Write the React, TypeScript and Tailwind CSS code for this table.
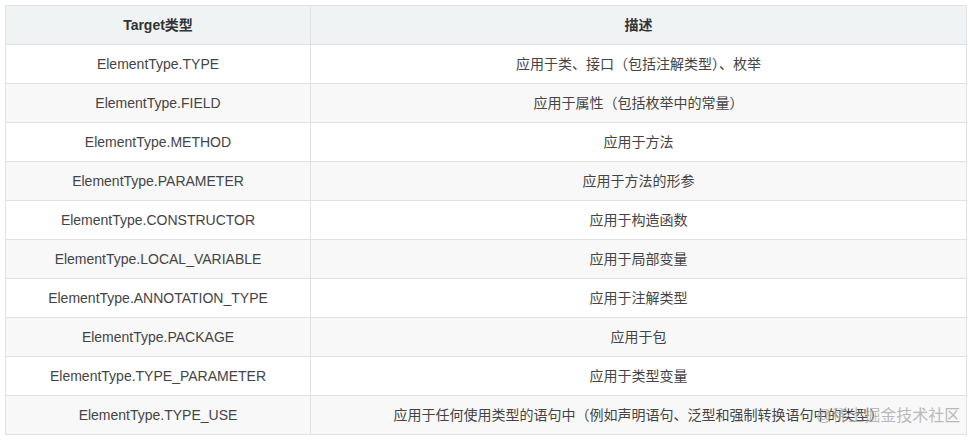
// Target 类型说明表 — ElementType 枚举对照
const rows: [string, string][] = [
  ['ElementType.TYPE', '应用于类、接口（包括注解类型）、枚举'],
  ['ElementType.FIELD', '应用于属性（包括枚举中的常量）'],
  ['ElementType.METHOD', '应用于方法'],
  ['ElementType.PARAMETER', '应用于方法的形参'],
  ['ElementType.CONSTRUCTOR', '应用于构造函数'],
  ['ElementType.LOCAL_VARIABLE', '应用于局部变量'],
  ['ElementType.ANNOTATION_TYPE', '应用于注解类型'],
  ['ElementType.PACKAGE', '应用于包'],
  ['ElementType.TYPE_PARAMETER', '应用于类型变量'],
  ['ElementType.TYPE_USE', '应用于任何使用类型的语句中（例如声明语句、泛型和强制转换语句中的类型）'],
];

const font = { fontFamily: '"Liberation Sans", "Noto Sans CJK SC", sans-serif' };

export default function App() {
  return (
    <div className="relative w-[973px] h-[440px] bg-white pt-[5px] pl-[5px]" style={font}>
      <table className="w-[962px] border-collapse table-fixed text-[14px] text-[#333]">
        <colgroup>
          <col className="w-[305px]" />
          <col />
        </colgroup>
        <thead>
          <tr className="h-[39px] bg-[#f0f3f4]">
            <th className="border border-[#dfe2e5] font-bold text-center">Target类型</th>
            <th className="border border-[#dfe2e5] font-bold text-center">描述</th>
          </tr>
        </thead>
        <tbody>
          {rows.map(([k, v], i) => (
            <tr key={k} className={`h-[39px] ${i % 2 === 1 ? 'bg-[#f8f8f8]' : 'bg-white'}`}>
              <td className="border border-[#dfe2e5] text-center text-[#444]">{k}</td>
              <td className="border border-[#dfe2e5] text-center text-[#444] whitespace-nowrap">{v}</td>
            </tr>
          ))}
        </tbody>
      </table>
      {/* 水印 */}
      <span className="absolute left-[816px] top-[405px] text-[16px] leading-[22px] text-[#a8a8a8]/80 whitespace-nowrap">
        @稀土掘金技术社区
      </span>
    </div>
  );
}
